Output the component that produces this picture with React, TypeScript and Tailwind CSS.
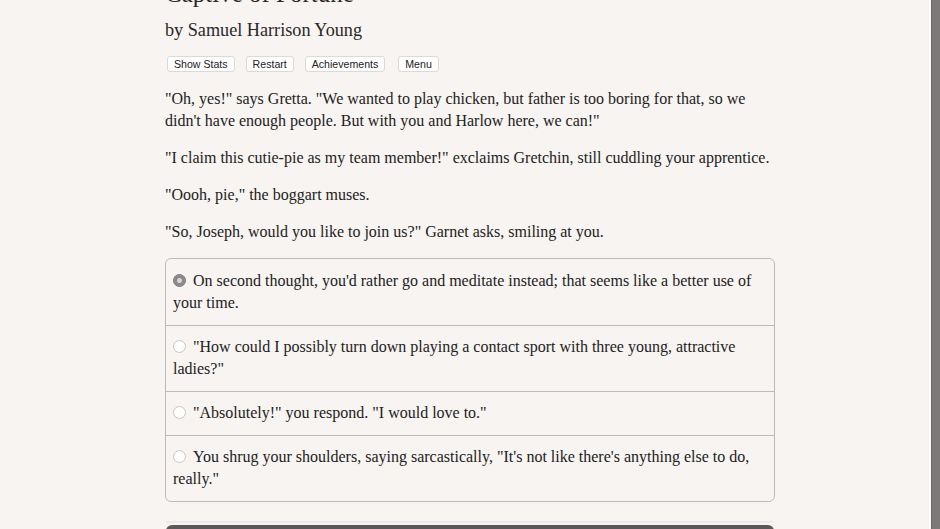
import React, { useState } from 'react';

const serif = "font-['Liberation_Serif',_'Times_New_Roman',_serif]";
const sans = "font-['Liberation_Sans',_Arial,_sans-serif]";

const paragraphs = [
  '"Oh, yes!" says Gretta. "We wanted to play chicken, but father is too boring for that, so we didn\'t have enough people. But with you and Harlow here, we can!"',
  '"I claim this cutie-pie as my team member!" exclaims Gretchin, still cuddling your apprentice.',
  '"Oooh, pie," the boggart muses.',
  '"So, Joseph, would you like to join us?" Garnet asks, smiling at you.',
];

const choices = [
  "On second thought, you'd rather go and meditate instead; that seems like a better use of your time.",
  '"How could I possibly turn down playing a contact sport with three young, attractive ladies?"',
  '"Absolutely!" you respond. "I would love to."',
  'You shrug your shoulders, saying sarcastically, "It\'s not like there\'s anything else to do, really."',
];

const Radio = ({ checked }: { checked: boolean }) => (
  <span
    className={`inline-block align-[-1px] w-[13px] h-[13px] rounded-full mr-[7px] ${
      checked
        ? 'bg-[#8a8888] border border-[#7a7878] shadow-[inset_0_0_0_3px_#8a8888,inset_0_0_0_6px_#d8d6d6]'
        : 'bg-white border border-[#c9c6c4]'
    }`}
  />
);

export default function App() {
  const [selected, setSelected] = useState(0);

  return (
    <div className="flex w-[940px] h-[529px] overflow-hidden bg-[#f7f4f1] text-[#232222]">
      <div className="flex-1 overflow-hidden">
        <div className={`ml-[165px] w-[610px] ${serif}`}>
          <h1 className="text-[25px] leading-[30px] mt-[-21px] mb-[9px] text-[#2a2828]">Captive of Fortune</h1>
          <div className="text-[18.2px] leading-[24px] text-[#2a2828]">by Samuel Harrison Young</div>

          <div className={`flex gap-[11px] mt-[14px] ml-[2px] ${sans}`}>
            {['Show Stats', 'Restart', 'Achievements', 'Menu'].map((b, i) => (
              <button
                key={b}
                className={`h-[16px] px-[6px] text-[10.6px] leading-[14px] text-[#222] bg-white border border-[#dcd9d6] rounded-[3px] ${
                  i === 3 ? 'ml-[2px]' : ''
                }`}
              >
                {b}
              </button>
            ))}
          </div>

          <div className="mt-[16px] text-[16px] leading-[22px]">
            {paragraphs.map((p, i) => (
              <p key={i} className="mb-[15px]">
                {p}
              </p>
            ))}
          </div>

          <div className="mt-[13px] border border-[#bdbab8] rounded-[6px] text-[16px] leading-[22px] overflow-hidden">
            {choices.map((c, i) => (
              <div
                key={i}
                onClick={() => setSelected(i)}
                className={`px-[7px] cursor-pointer ${i > 0 ? 'border-t border-[#bdbab8] pt-[10px] pb-[11px]' : 'py-[11px]'}`}
              >
                <Radio checked={selected === i} />
                {c}
              </div>
            ))}
          </div>

          <div className="mt-[19px] mx-[1px] border-t-2 border-[#ecebea] pt-[2px]">
            <button className={`w-full h-[40px] bg-[#5a5858] rounded-t-[6px] text-white text-[17px] ${serif}`}>Next</button>
          </div>
        </div>
      </div>
      <div className="w-[11px] h-full flex">
        <div className="w-[2px] bg-[#fbfaf9]" />
        <div className="flex-1 bg-[#7d7979] border-l border-[#6f6b6b]" />
      </div>
    </div>
  );
}
